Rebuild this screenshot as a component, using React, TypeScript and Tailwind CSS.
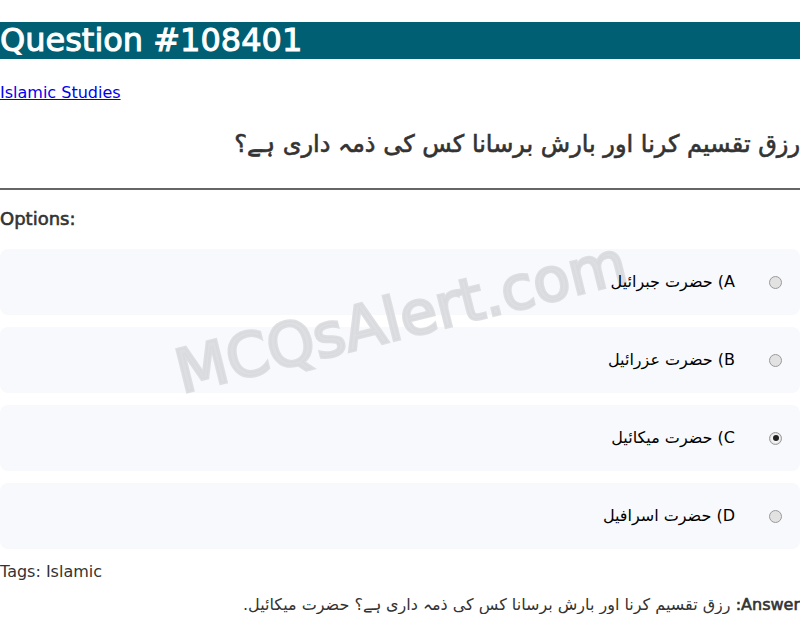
const options = [
  { key: "A", text: "حضرت جبرائیل" },
  { key: "B", text: "حضرت عزرائیل" },
  { key: "C", text: "حضرت میکائیل" },
  { key: "D", text: "حضرت اسرافیل" },
];

const question = "رزق تقسیم کرنا اور بارش برسانا کس کی ذمہ داری ہے؟";

// the page's bold is a thickened regular face, so stroke the regular one
const fauxBold = "font-normal [-webkit-text-stroke:0.6px_currentColor]";

function Radio({ checked }: { checked: boolean }) {
  return (
    <span className="flex h-[13px] w-[13px] shrink-0 items-center justify-center rounded-full border border-[#9a9a9a] bg-[#e2e2e2]">
      {checked && (
        <span className="flex h-[9px] w-[9px] items-center justify-center rounded-full bg-[#f4f4f4]">
          <span className="h-[6px] w-[6px] rounded-full bg-[#222]" />
        </span>
      )}
    </span>
  );
}

export default function App() {
  return (
    <div className="relative font-['DejaVu_Sans',sans-serif] text-[16px] text-[#333]">
      <h1 className="mt-[22px] bg-[#005f73] text-[32px] font-normal leading-[37px] text-white [-webkit-text-stroke:1px_currentColor]">
        Question #108401
      </h1>

      <a href="#" className="mt-[24px] block w-fit leading-[19px] text-[#0000ee] underline">
        Islamic Studies
      </a>

      <h2 dir="rtl" className={`mt-[28px] text-[24px] leading-[28px] ${fauxBold}`}>
        {question}
      </h2>

      <hr className="mt-[30px] border-t-2 border-[#666]" />

      <h3 className={`mt-[18px] text-[18px] leading-[21px] ${fauxBold}`}>Options:</h3>

      <div className="mt-[20px] flex flex-col gap-3">
        {options.map((o) => (
          <label
            key={o.key}
            dir="rtl"
            className="flex h-[66px] items-center gap-[34px] rounded-lg bg-[#f8f9fc] pr-[18px] text-black"
          >
            <Radio checked={o.key === "C"} />
            <span className="relative z-10">
              {o.key}) {o.text}
            </span>
          </label>
        ))}
      </div>

      <p className="mt-[13px] leading-[19px]">Tags: Islamic</p>

      <p dir="rtl" className="mt-[14px] leading-[19px]">
        <strong className={fauxBold}>Answer:</strong> {question} حضرت میکائیل.
      </p>

      <div className="pointer-events-none absolute left-[401px] top-[295px] -translate-x-1/2 -translate-y-1/2 -rotate-[14deg] whitespace-nowrap text-[60px] font-normal text-[#d8d9dd]/85 [-webkit-text-stroke:3px_currentColor]">
        MCQsAlert.com
      </div>
    </div>
  );
}
